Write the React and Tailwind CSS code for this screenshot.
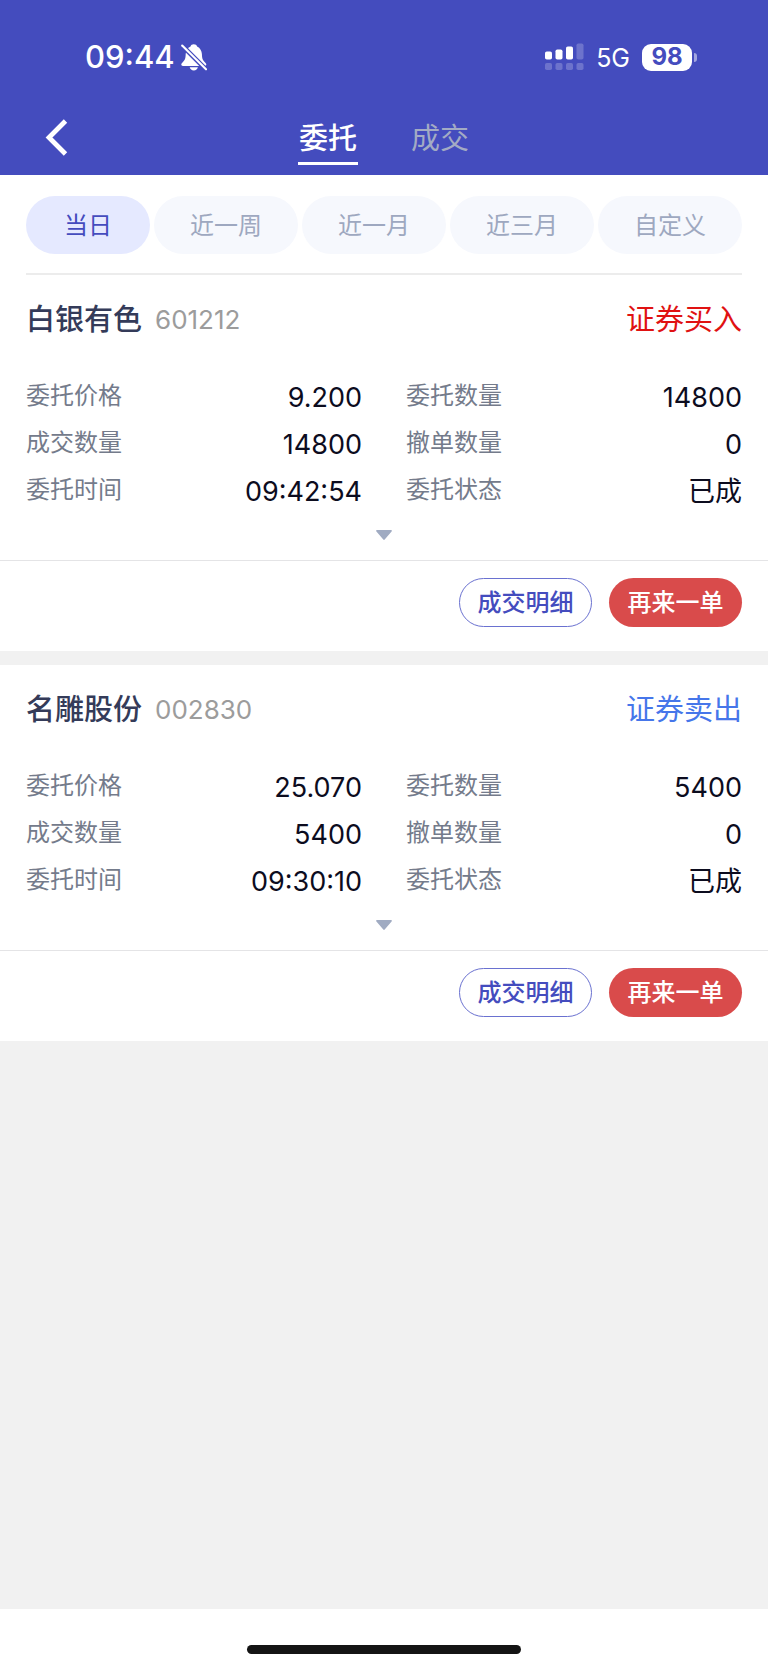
import React, { useState } from 'react';
import clsx from 'clsx';

const tabs = ['委托', '成交'];
const ranges = ['当日', '近一周', '近一月', '近三月', '自定义'];

const orders = [
  {
    name: '白银有色',
    code: '601212',
    side: 'buy',
    sideText: '证券买入',
    fields: [
      ['委托价格', '9.200'],
      ['委托数量', '14800'],
      ['成交数量', '14800'],
      ['撤单数量', '0'],
      ['委托时间', '09:42:54'],
      ['委托状态', '已成'],
    ],
  },
  {
    name: '名雕股份',
    code: '002830',
    side: 'sell',
    sideText: '证券卖出',
    fields: [
      ['委托价格', '25.070'],
      ['委托数量', '5400'],
      ['成交数量', '5400'],
      ['撤单数量', '0'],
      ['委托时间', '09:30:10'],
      ['委托状态', '已成'],
    ],
  },
];

function BellOffIcon() {
  return (
    <svg className="h-7 w-[26px]" viewBox="0 0 26 28" fill="none">
      <path
        d="M12.8 1.2c-1.7 0-2.9.9-3.3 2.200C6.400 4.900 4.900 7.700 4.700 11c-.1 4.600-1 6.400-3 8.300-1 1-1.400 1.700-1.400 2.300 0 .8.600 1.300 1.600 1.300h21.800c1 0 1.600-.5 1.600-1.300 0-.6-.4-1.300-1.400-2.300-2-1.900-2.900-3.700-3-8.300-.2-3.300-1.700-6.100-4.800-7.600-.4-1.300-1.600-2.200-3.300-2.200z"
        fill="white"
      />
      <path d="M8.700 24.300h8.200c-.4 1.900-2 3.100-4.100 3.100s-3.700-1.200-4.100-3.100z" fill="white" />
      <path d="M0.500 2 25.500 27" stroke="#444cbe" strokeWidth="4.600" />
      <path d="M1.200 2.500 25 26.300" stroke="white" strokeWidth="2.100" strokeLinecap="round" />
    </svg>
  );
}

function SignalIcon() {
  return (
    <svg className="h-7 w-[39px]" viewBox="0 0 39 28" fill="white">
      <rect x="0" y="8.500" width="7" height="8" rx="1.800" />
      <rect x="10.500" y="6.500" width="7" height="10" rx="1.800" />
      <rect x="21" y="3.500" width="7" height="13" rx="1.800" />
      <g opacity="0.22">
        <rect x="31.500" y="0.500" width="7" height="16" rx="1.800" />
        <rect x="0" y="20" width="7" height="7" rx="1.800" />
        <rect x="10.500" y="20" width="7" height="7" rx="1.800" />
        <rect x="21" y="20" width="7" height="7" rx="1.800" />
        <rect x="31.500" y="20" width="7" height="7" rx="1.800" />
      </g>
    </svg>
  );
}

function StatusBar() {
  return (
    <div className="flex h-[100px] items-center justify-between pt-[14px] pr-[71px] pl-[85px] text-white">
      <div className="flex items-center gap-[6px]">
        <span className="text-[31px] leading-8 font-medium">09:44</span>
        <BellOffIcon />
      </div>
      <div className="flex items-center">
        <SignalIcon />
        <span className="ml-3 pt-[2px] text-[25px] leading-8">5G</span>
        <div className="ml-3 flex items-center gap-[2px]">
          <span className="flex h-[27px] w-[50px] items-center justify-center rounded-[9px] bg-white text-2xl leading-none font-bold text-[#444cbe]">
            98
          </span>
          <span className="h-[9px] w-[3px] rounded-r-full bg-white/50" />
        </div>
      </div>
    </div>
  );
}

function NavBar({ active, onChange }) {
  return (
    <nav className="flex h-[75px] items-center px-[45px]">
      <button type="button" aria-label="返回" className="w-6">
        <svg className="h-[37px] w-6" viewBox="0 0 24 37" fill="none" stroke="white" strokeWidth="4.800">
          <path d="M20.500 2 4 18.500 20.500 35" />
        </svg>
      </button>
      <div className="mr-6 flex flex-1 justify-center gap-[52px]">
        {tabs.map((tab) => (
          <button
            key={tab}
            type="button"
            onClick={() => onChange(tab)}
            className={clsx(
              'flex h-[54px] w-[60px] items-center justify-center border-b-[3px] pt-[6px] text-[29px] leading-10',
              tab === active ? 'border-white font-medium text-white' : 'border-transparent text-[#a3abc4]'
            )}
          >
            {tab}
          </button>
        ))}
      </div>
    </nav>
  );
}

function RangeFilter({ active, onChange }) {
  return (
    <div className="mx-[26px] flex h-[100px] items-center gap-1 border-b-2 border-[#ececec] pt-[2px]">
      {ranges.map((range) => (
        <button
          key={range}
          type="button"
          onClick={() => onChange(range)}
          className={clsx(
            'h-[58px] flex-1 rounded-full pt-[2px] text-2xl first:w-[124px] first:flex-none',
            range === active ? 'bg-[#e5e9ff] text-[#444cbe]' : 'bg-[#f6f8fd] text-[#9ea8c0]'
          )}
        >
          {range}
        </button>
      ))}
    </div>
  );
}

function OrderCard({ order }) {
  return (
    <section className="bg-white">
      <div className="flex h-[88px] items-center justify-between px-[26px] pt-[2px]">
        <div className="flex items-center gap-[13px]">
          <h2 className="text-[29px] leading-10 font-medium text-[#343b59]">{order.name}</h2>
          <span className="text-[26px] leading-10 text-[#9c9c9c]">{order.code}</span>
        </div>
        <span
          className={clsx(
            'text-[29px] leading-10',
            order.side === 'buy' ? 'text-[#e01212]' : 'text-[#4676ea]'
          )}
        >
          {order.sideText}
        </span>
      </div>

      <dl className="grid grid-cols-2 gap-x-11 px-[26px] pt-[11px]">
        {order.fields.map(([label, value]) => (
          <div key={label} className="flex h-[47px] items-center justify-between">
            <dt className="pb-1 text-2xl text-[#747b8b]">{label}</dt>
            <dd className="text-[27px] leading-10 text-[#0c0c1e]">{value}</dd>
          </div>
        ))}
      </dl>

      <button
        type="button"
        aria-label="展开"
        className="flex h-[45px] w-full items-center justify-center pb-[6px]"
      >
        <svg className="h-[10px] w-4" viewBox="0 0 16 10" fill="#a0abc2">
          <path d="M1 0h14c.9 0 1.200.8.600 1.500L8.700 9.500c-.4.500-1 .5-1.400 0L.4 1.500C-.2.800.1 0 1 0z" />
        </svg>
      </button>

      <div className="flex justify-end gap-[17px] border-t border-[#e4e4e6] px-[26px] pt-[17px] pb-6">
        <button
          type="button"
          className="h-[49px] w-[133px] rounded-full border border-[#6a71d0] text-2xl font-medium text-[#444cbe]"
        >
          成交明细
        </button>
        <button
          type="button"
          className="h-[49px] w-[133px] rounded-full bg-[#d94b4b] text-2xl font-medium text-white"
        >
          再来一单
        </button>
      </div>
    </section>
  );
}

export function App() {
  const [tab, setTab] = useState('委托');
  const [range, setRange] = useState('当日');

  return (
    <div className="flex min-h-screen flex-col bg-[#f1f1f1] font-['Inter','Noto_Sans_CJK_SC',sans-serif]">
      <header className="bg-[#444cbe]">
        <StatusBar />
        <NavBar active={tab} onChange={setTab} />
      </header>

      <main className="flex-1">
        <div className="bg-white">
          <RangeFilter active={range} onChange={setRange} />
        </div>
        <div className="flex flex-col gap-[14px]">
          {orders.map((order) => (
            <OrderCard key={order.code} order={order} />
          ))}
        </div>
      </main>

      {/* home indicator */}
      <footer className="flex h-[60px] items-end justify-center bg-white pb-[15px]">
        <div className="h-[9px] w-[274px] rounded-full bg-[#141414]" />
      </footer>
    </div>
  );
}

export default App;
